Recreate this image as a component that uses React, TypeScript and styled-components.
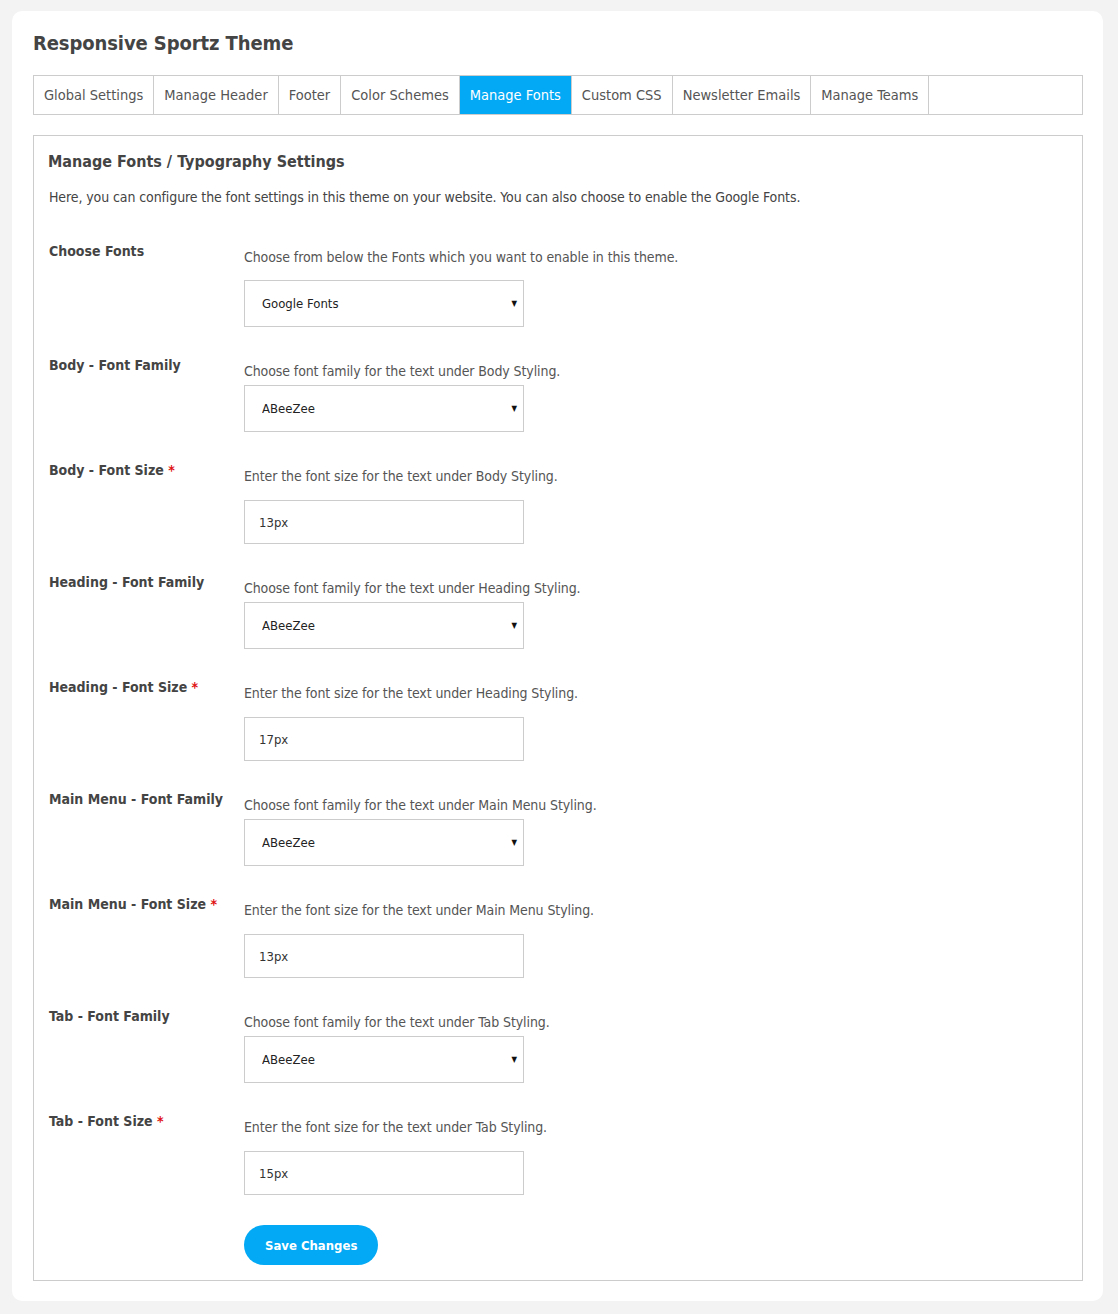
import React from 'react';
import styled, { createGlobalStyle } from 'styled-components';

const GlobalStyle = createGlobalStyle`
  html, body {
    margin: 0;
    padding: 0;
    background: #f3f3f3;
  }
  body {
    font-family: "DejaVu Sans Condensed", "DejaVu Sans", sans-serif;
    color: #555;
  }
`;

// Outer white card
const Page = styled.div`
  padding: 11px 15px 13px 12px;
`;

const Card = styled.div`
  background: #fff;
  border-radius: 10px;
  padding: 19px 20px 20px 21px;
`;

const Title = styled.h1`
  margin: 0 0 19px;
  font-size: 20px;
  line-height: 26px;
  font-weight: bold;
  color: #444;
  letter-spacing: -0.1px;
`;

// Tab strip
const TabBar = styled.nav`
  display: flex;
  height: 38px;
  border: 1px solid #ccc;
  background: #fff;
`;

const Tab = styled.a<{ $active?: boolean }>`
  display: flex;
  align-items: center;
  padding: 0 10px;
  border-right: 1px solid #ccc;
  font-size: 14.5px;
  color: ${p => (p.$active ? '#fff' : '#555')};
  background: ${p => (p.$active ? '#03a9f4' : 'transparent')};
  text-decoration: none;
  white-space: nowrap;
  cursor: pointer;
`;

// Settings panel
const Panel = styled.section`
  margin-top: 20px;
  border: 1px solid #ccc;
  padding: 15px;
`;

const PanelTitle = styled.h2`
  margin: 0 0 14px -1px;
  font-size: 16px;
  line-height: 22px;
  font-weight: bold;
  color: #444;
`;

const Intro = styled.p`
  margin: 0 0 34px;
  font-size: 14px;
  letter-spacing: -0.1px;
  line-height: 20px;
  color: #444;
`;

const Row = styled.div`
  display: grid;
  grid-template-columns: 195px 1fr;
  margin-bottom: 28px;
`;

const Label = styled.label`
  font-size: 14px;
  line-height: 20px;
  font-weight: bold;
  color: #444;
`;

const Required = styled.span`
  color: #e01010;
`;

const Field = styled.div`
  padding-top: 6px;
  display: flex;
  flex-direction: column;
  align-items: flex-start;
`;

const Hint = styled.div<{ $gap: number }>`
  font-size: 14px;
  letter-spacing: -0.1px;
  line-height: 20px;
  color: #555;
  margin-bottom: ${p => p.$gap}px;
`;

const SelectWrap = styled.div`
  position: relative;
  width: 280px;
  height: 47px;

  &::after {
    content: '▼';
    position: absolute;
    right: 7px;
    top: 50%;
    transform: translateY(-55%);
    font-size: 8px;
    color: #111;
    pointer-events: none;
  }
`;

const Select = styled.select`
  appearance: none;
  width: 100%;
  height: 100%;
  box-sizing: border-box;
  border: 1px solid #ccc;
  border-radius: 0;
  background: #fff;
  padding: 0 17px;
  font-family: inherit;
  font-size: 13px;
  color: #222;
  outline: none;
`;

const TextInput = styled.input`
  width: 280px;
  height: 44px;
  box-sizing: border-box;
  border: 1px solid #ccc;
  padding: 0 14px;
  font-family: inherit;
  font-size: 13px;
  color: #333;
  outline: none;
`;

const Actions = styled.div`
  padding: 2px 0 0 195px;
`;

const SaveButton = styled.button`
  height: 40px;
  padding: 0 21px;
  border: none;
  border-radius: 20px;
  background: #03a9f4;
  color: #fff;
  font-family: inherit;
  font-size: 13px;
  font-weight: bold;
  cursor: pointer;
`;

const tabs = [
  'Global Settings',
  'Manage Header',
  'Footer',
  'Color Schemes',
  'Manage Fonts',
  'Custom CSS',
  'Newsletter Emails',
  'Manage Teams',
];

type Setting = {
  label: string;
  hint: string;
  kind: 'select' | 'input';
  value: string;
  required?: boolean;
  gap: number;
};

const settings: Setting[] = [
  { label: 'Choose Fonts', hint: 'Choose from below the Fonts which you want to enable in this theme.', kind: 'select', value: 'Google Fonts', gap: 13 },
  { label: 'Body - Font Family', hint: 'Choose font family for the text under Body Styling.', kind: 'select', value: 'ABeeZee', gap: 4 },
  { label: 'Body - Font Size', hint: 'Enter the font size for the text under Body Styling.', kind: 'input', value: '13px', required: true, gap: 14 },
  { label: 'Heading - Font Family', hint: 'Choose font family for the text under Heading Styling.', kind: 'select', value: 'ABeeZee', gap: 4 },
  { label: 'Heading - Font Size', hint: 'Enter the font size for the text under Heading Styling.', kind: 'input', value: '17px', required: true, gap: 14 },
  { label: 'Main Menu - Font Family', hint: 'Choose font family for the text under Main Menu Styling.', kind: 'select', value: 'ABeeZee', gap: 4 },
  { label: 'Main Menu - Font Size', hint: 'Enter the font size for the text under Main Menu Styling.', kind: 'input', value: '13px', required: true, gap: 14 },
  { label: 'Tab - Font Family', hint: 'Choose font family for the text under Tab Styling.', kind: 'select', value: 'ABeeZee', gap: 4 },
  { label: 'Tab - Font Size', hint: 'Enter the font size for the text under Tab Styling.', kind: 'input', value: '15px', required: true, gap: 14 },
];

const App: React.FC = () => {
  return (
    <Page>
      <GlobalStyle />
      <Card>
        <Title>Responsive Sportz Theme</Title>
        <TabBar>
          {tabs.map(t => (
            <Tab key={t} $active={t === 'Manage Fonts'}>{t}</Tab>
          ))}
        </TabBar>

        <Panel>
          <PanelTitle>Manage Fonts / Typography Settings</PanelTitle>
          <Intro>
            Here, you can configure the font settings in this theme on your website. You can also choose to enable the Google Fonts.
          </Intro>

          {settings.map(s => (
            <Row key={s.label}>
              <Label>
                {s.label}
                {s.required && <Required> *</Required>}
              </Label>
              <Field>
                <Hint $gap={s.gap}>{s.hint}</Hint>
                {s.kind === 'select' ? (
                  <SelectWrap>
                    <Select defaultValue={s.value}>
                      <option>{s.value}</option>
                    </Select>
                  </SelectWrap>
                ) : (
                  <TextInput type="text" defaultValue={s.value} />
                )}
              </Field>
            </Row>
          ))}

          <Actions>
            <SaveButton>Save Changes</SaveButton>
          </Actions>
        </Panel>
      </Card>
    </Page>
  );
};

export default App;
